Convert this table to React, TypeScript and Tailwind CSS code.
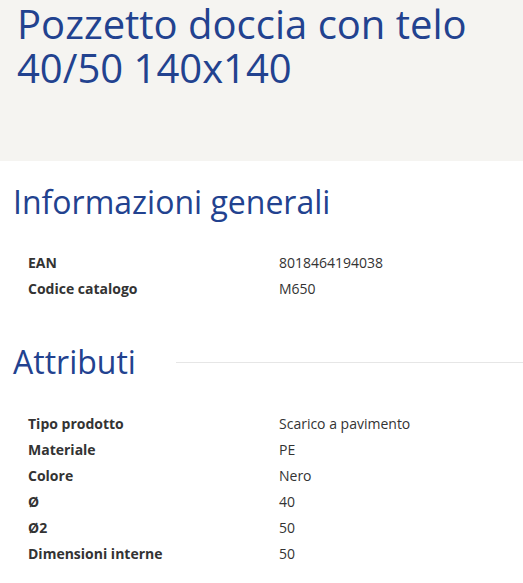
export default function App() {
  const info = [
    ["EAN", "8018464194038"],
    ["Codice catalogo", "M650"],
  ];
  const attrs = [
    ["Tipo prodotto", "Scarico a pavimento"],
    ["Materiale", "PE"],
    ["Colore", "Nero"],
    ["Ø", "40"],
    ["Ø2", "50"],
    ["Dimensioni interne", "50"],
  ];
  return (
    <div className="w-[523px] min-h-[583px] bg-white" style={{ fontFamily: '"Open Sans", sans-serif' }}>
      <div className="bg-[#f5f4f1] h-[161px] pl-[17px] pt-[2px]">
        <h1 className="text-[40px] leading-[44px] text-[#22428f] font-normal">
          Pozzetto doccia con telo 40/50 140x140
        </h1>
      </div>
      <h2 className="mt-[20px] ml-[13px] text-[32px] leading-[42px] text-[#22428f]">Informazioni generali</h2>
      <div className="mt-[26px] pl-[28px]">
        {info.map(([k, v]) => (
          <div key={k} className="flex h-[26px] items-center text-[14px] text-[#333]">
            <div className="w-[251px] font-bold">{k}</div>
            <div>{v}</div>
          </div>
        ))}
      </div>
      <div className="mt-[40px] flex items-center">
        <h2 className="ml-[13px] text-[32px] leading-[42px] text-[#22428f]">Attributi</h2>
        <div className="ml-[40px] flex-1 h-px bg-[#e6e6e6] mt-[1px]" />
      </div>
      <div className="mt-[28px] pl-[28px]">
        {attrs.map(([k, v]) => (
          <div key={k} className="flex h-[25.9px] items-center text-[14px] text-[#333]">
            <div className="w-[251px] font-bold">{k}</div>
            <div>{v}</div>
          </div>
        ))}
      </div>
    </div>
  );
}
